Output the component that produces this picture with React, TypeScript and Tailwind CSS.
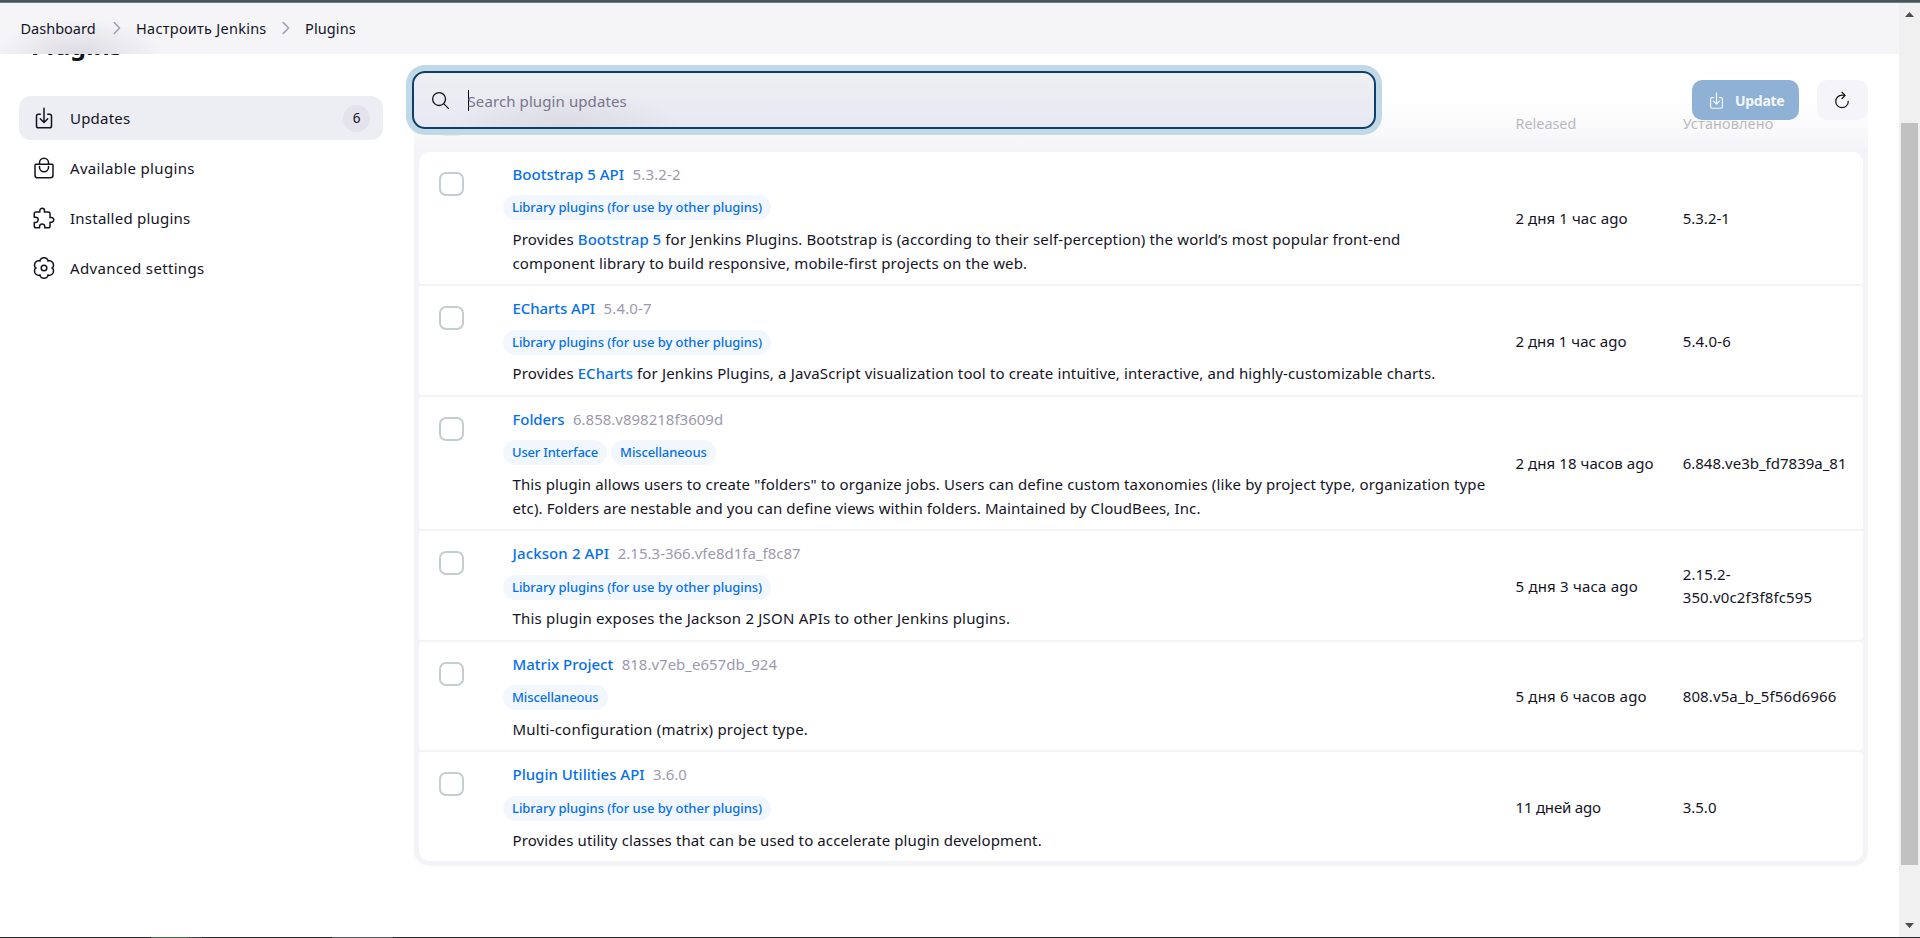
import type { ReactNode } from 'react';
import {
  IoBagHandleOutline,
  IoDownloadOutline,
  IoExtensionPuzzleOutline,
  IoRefreshOutline,
  IoSearchOutline,
} from 'react-icons/io5';

const COLS = 'grid grid-cols-[93.5px_1003px_167.2px_1fr]';

type Plugin = {
  name: string;
  version: string;
  nameClass?: string;
  versionClass?: string;
  tags: { label: string; className: string }[];
  tagsClass?: string;
  description: ReactNode;
  descriptionClass?: string;
  released: string;
  releasedClass?: string;
  installed: string;
  installedClass?: string;
  rowClass: string;
};

const LIBRARY = { label: 'Library plugins (for use by other plugins)', className: 'tracking-[-0.05px]' };
const MISC = { label: 'Miscellaneous', className: 'tracking-[-0.12px]' };

const Link = ({ children }: { children: ReactNode }) => (
  <a className="font-medium tracking-normal text-[#0670e8]">{children}</a>
);

const plugins: Plugin[] = [
  {
    name: 'Bootstrap 5 API',
    version: '5.3.2-2',
    versionClass: 'tracking-[0.15px]',
    tags: [LIBRARY],
    description: (
      <>
        Provides <Link>Bootstrap 5</Link> for Jenkins Plugins. Bootstrap is (according to their self-perception) the
        world’s most popular front-end
        <br />
        component library to build responsive, mobile-first projects on the web.
      </>
    ),
    descriptionClass: 'tracking-[0.15px]',
    released: '2 дня 1 час ago',
    installed: '5.3.2-1',
    rowClass: 'h-[132px] rounded-t-[11px] rounded-b-[3px]',
  },
  {
    name: 'ECharts API',
    version: '5.4.0-7',
    nameClass: 'tracking-[-0.08px]',
    versionClass: 'tracking-[0.15px]',
    tags: [LIBRARY],
    tagsClass: 'mt-[10px] mb-[6px]',
    description: (
      <>
        Provides <Link>ECharts</Link> for Jenkins Plugins, a JavaScript visualization tool to create intuitive,
        interactive, and highly-customizable charts.
      </>
    ),
    descriptionClass: 'tracking-[0.14px]',
    released: '2 дня 1 час ago',
    releasedClass: 'pt-[1px]',
    installed: '5.4.0-6',
    installedClass: 'pt-[1px] tracking-[0.15px]',
    rowClass: 'h-[109px] rounded-[3px]',
  },
  {
    name: 'Folders',
    version: '6.858.v898218f3609d',
    nameClass: 'tracking-[-0.1px]',
    tags: [{ label: 'User Interface', className: 'tracking-[-0.2px]' }, MISC],
    description: (
      <>
        This plugin allows users to create "folders" to organize jobs. Users can define custom taxonomies (like by
        project type, organization type
        <br />
        <span className="tracking-[0.11px]">
          etc). Folders are nestable and you can define views within folders. Maintained by CloudBees, Inc.
        </span>
      </>
    ),
    descriptionClass: 'tracking-[0.125px]',
    released: '2 дня 18 часов ago',
    installed: '6.848.ve3b_fd7839a_81',
    rowClass: 'h-[132px] rounded-[3px]',
  },
  {
    name: 'Jackson 2 API',
    version: '2.15.3-366.vfe8d1fa_f8c87',
    nameClass: 'tracking-[0.12px]',
    tags: [LIBRARY],
    tagsClass: 'mt-[10px] mb-[6px]',
    description: 'This plugin exposes the Jackson 2 JSON APIs to other Jenkins plugins.',
    descriptionClass: 'tracking-[0.2px]',
    released: '5 дня 3 часа ago',
    releasedClass: 'pt-[1px] tracking-[0.2px]',
    installed: '2.15.2-350.v0c2f3f8fc595',
    installedClass: 'tracking-[0.13px]',
    rowClass: 'h-[109px] rounded-[3px]',
  },
  {
    name: 'Matrix Project',
    version: '818.v7eb_e657db_924',
    tags: [MISC],
    description: 'Multi-configuration (matrix) project type.',
    descriptionClass: 'tracking-[0.22px]',
    released: '5 дня 6 часов ago',
    releasedClass: 'tracking-[0.18px]',
    installed: '808.v5a_b_5f56d6966',
    installedClass: 'tracking-[0.12px]',
    rowClass: 'h-[108px] rounded-[3px]',
  },
  {
    name: 'Plugin Utilities API',
    version: '3.6.0',
    tags: [LIBRARY],
    tagsClass: 'mt-[10px] mb-[7px]',
    description: 'Provides utility classes that can be used to accelerate plugin development.',
    descriptionClass: 'tracking-[0.11px]',
    released: '11 дней ago',
    releasedClass: 'pt-[1px] tracking-[-0.2px]',
    installed: '3.5.0',
    installedClass: 'pt-[1px]',
    rowClass: 'h-[109px] rounded-t-[3px] rounded-b-[11px]',
  },
];

// Six-lobed outline around (12, 12)
const gearPath =
  Array.from({ length: 120 }, (_, i) => {
    const angle = (i / 120) * Math.PI * 2;
    const radius = 7.9 + 2.3 * Math.pow(Math.abs(Math.cos(3 * angle)), 0.55);
    const x = (12 + radius * Math.sin(angle)).toFixed(2);
    const y = (12 - radius * Math.cos(angle)).toFixed(2);
    return `${i ? 'L' : 'M'}${x} ${y}`;
  }).join('') + 'Z';

const GearIcon = ({ size }: { size: number }) => (
  <svg width={size} height={size} viewBox="0 0 24 24" fill="none" stroke="currentColor" strokeWidth="1.5" strokeLinejoin="round">
    <path d={gearPath} />
    <circle cx="12" cy="12" r="2.8" />
  </svg>
);

const nav = [
  { label: 'Updates', icon: IoDownloadOutline, className: 'tracking-[0.2px]', badge: '6' },
  { label: 'Available plugins', icon: IoBagHandleOutline, className: 'tracking-[0.33px]' },
  { label: 'Installed plugins', icon: IoExtensionPuzzleOutline, className: 'tracking-[0.23px]' },
  { label: 'Advanced settings', icon: GearIcon, className: 'tracking-[0.33px]' },
];

const Chevron = () => (
  <svg width="8" height="14" viewBox="0 0 8 14" fill="none" stroke="#a3a2b4" strokeWidth="1.6" strokeLinecap="round" strokeLinejoin="round">
    <path d="M1.3 1.6 6.6 7l-5.3 5.4" />
  </svg>
);

function Breadcrumbs() {
  return (
    <header className="relative z-10 flex h-[51px] shrink-0 items-center bg-[#f5f5f8] bg-[radial-gradient(ellipse_85px_36px_at_78px_52px,#dcdbe2_0%,#e6e5eb_40%,#f5f5f800_100%)] pt-[1px] pb-[2px] pl-[20.5px] text-[14.5px]">
      <span>Dashboard</span>
      <span className="ml-[17px] flex w-2"><Chevron /></span>
      <span className="ml-[15.5px] tracking-[0.26px]">Настроить Jenkins</span>
      <span className="ml-[15.5px] flex w-2"><Chevron /></span>
      <span className="ml-[15px] tracking-[0.1px]">Plugins</span>
    </header>
  );
}

function Sidebar() {
  return (
    <aside className="w-[364px] shrink-0">
      <h1 className="-mt-[26px] pl-[12px] text-[25px] leading-[34px] font-bold">Plugins</h1>
      <nav className="mt-[34px] flex flex-col gap-[6px]">
        {nav.map(({ label, icon: Icon, className, badge }) => (
          <a
            key={label}
            className={`flex h-[44px] items-center rounded-[12px] pr-[13px] pl-[13px] ${badge ? 'bg-[#edeef3]' : ''}`}
          >
            <Icon size={24} />
            <span className={`ml-[14px] ${className}`}>{label}</span>
            {badge && (
              <span className="ml-auto flex size-[27px] items-center justify-center rounded-full bg-[#e3e2ed] text-[13.5px]">
                {badge}
              </span>
            )}
          </a>
        ))}
      </nav>
    </aside>
  );
}

function Toolbar() {
  return (
    <div className="absolute top-[17px] right-0 -left-[2px] flex h-[58px] items-center">
      <div className="flex h-full w-[964px] items-center rounded-[13px] border-2 border-[#0b4168] bg-[radial-gradient(ellipse_120px_44px_at_150px_60px,#d9d8e2_0%,#e0e0e8_45%,#e9e9f100_100%),linear-gradient(#eeeff3,#e8e8f2)] pl-[16px] shadow-[0_0_0_6px_#c1d9e6]">
        <IoSearchOutline size={21} />
        <span className="ml-[16.5px] h-[21px] w-px bg-black" />
        <span className="-ml-px pt-[2px] tracking-[0.1px] text-[#77758c]">Search plugin updates</span>
      </div>
      <button className="ml-auto flex h-[40px] w-[107px] items-center rounded-[10px] bg-[#90b1d6] pl-[15px] text-[14px] font-bold tracking-[-0.3px] text-white/90">
        <IoDownloadOutline size={19} />
        <span className="ml-[9px] pt-px">Update</span>
      </button>
      <button className="ml-[18px] flex h-[40px] w-[51px] items-center justify-center rounded-[10px] bg-[#f5f4f8] pr-[2px]">
        <IoRefreshOutline size={20} />
      </button>
    </div>
  );
}

function PluginRow({ plugin }: { plugin: Plugin }) {
  return (
    <div className={`${COLS} bg-white ${plugin.rowClass}`}>
      <div className="pt-5 pl-5">
        <div className="h-[24px] w-[25px] rounded-[7px] border-2 border-[#c3cdd2]" />
      </div>
      <div className="pt-[10px]">
        <div className="flex gap-[8.5px] leading-6">
          <a className={`font-medium text-[#0670e8] ${plugin.nameClass ?? ''}`}>{plugin.name}</a>
          <span className={`text-[#9c9aae] ${plugin.versionClass ?? ''}`}>{plugin.version}</span>
        </div>
        <div className={`-ml-[9.5px] flex gap-1 ${plugin.tagsClass ?? 'mt-[9px] mb-[7px]'}`}>
          {plugin.tags.map((tag) => (
            <span
              key={tag.label}
              className={`h-[25px] rounded-full bg-[#f2f7fe] px-[9px] text-[13px] leading-[25px] font-medium text-[#0670e8] ${tag.className}`}
            >
              {tag.label}
            </span>
          ))}
        </div>
        <p className={`leading-6 whitespace-nowrap ${plugin.descriptionClass ?? ''}`}>{plugin.description}</p>
      </div>
      <div className={`self-center leading-[23px] ${plugin.releasedClass ?? 'tracking-[0.07px]'}`}>
        {plugin.released}
      </div>
      <div className={`self-center pr-3 leading-[23px] ${plugin.installedClass ?? ''}`}>{plugin.installed}</div>
    </div>
  );
}

function Scrollbar() {
  return (
    <div className="flex w-[21px] shrink-0 flex-col items-center bg-[#f0f0f0]">
      <svg width="9" height="5" viewBox="0 0 9 5" className="mt-[9px] shrink-0 fill-[#4d4d4d]">
        <path d="M4.5 0 9 5H0z" />
      </svg>
      <div className="mt-[106px] h-[742px] w-[17px] shrink-0 bg-[#c1c1c1]" />
      <svg width="9" height="5" viewBox="0 0 9 5" className="mt-auto mb-[9px] shrink-0 fill-[#4d4d4d]">
        <path d="M0 0h9L4.5 5z" />
      </svg>
    </div>
  );
}

export default function App() {
  return (
    <div className="flex h-[938px] w-[1920px] flex-col overflow-hidden bg-white font-['Noto_Sans',sans-serif] text-[15px] leading-6 text-[#14141f]">
      <div className="h-[3px] shrink-0 border-b border-[#6b7d84] bg-[#45545d]" />
      <div className="flex min-h-0 flex-1">
        <div className="flex w-[1899px] flex-col">
          <Breadcrumbs />
          <div className="flex items-start gap-[31px] pl-[19px]">
            <Sidebar />
            <main className="relative w-[1454px] pt-[46px]">
              <div className="rounded-b-[15px] bg-[linear-gradient(#ffffff_0px,#f8f8fa_35px,#f4f3f8_52px)] px-[5px] pb-[5px]">
                <div className={`${COLS} h-[52px] text-[14.4px] leading-[48px] text-[#b9b9bf]`}>
                  <div className="pt-[12px] pl-5">
                    <div className="h-[24px] w-[25px] rounded-[7px] border-2 border-[#e8ebee]" />
                  </div>
                  <div />
                  <div>Released</div>
                  <div className="tracking-[0.15px]">Установлено</div>
                </div>
                <div className="flex flex-col gap-[2px]">
                  {plugins.map((plugin) => (
                    <PluginRow key={plugin.name} plugin={plugin} />
                  ))}
                </div>
              </div>
              <Toolbar />
            </main>
          </div>
        </div>
        <Scrollbar />
      </div>
      <div className="flex h-px shrink-0 bg-[#25252a]">
        <div className="ml-[151px] w-[38px] bg-[#3f6b3f]" />
        <div className="w-[13px] bg-[#404044]" />
        <div className="ml-[130px] w-[61px] bg-[#58585c]" />
      </div>
    </div>
  );
}
